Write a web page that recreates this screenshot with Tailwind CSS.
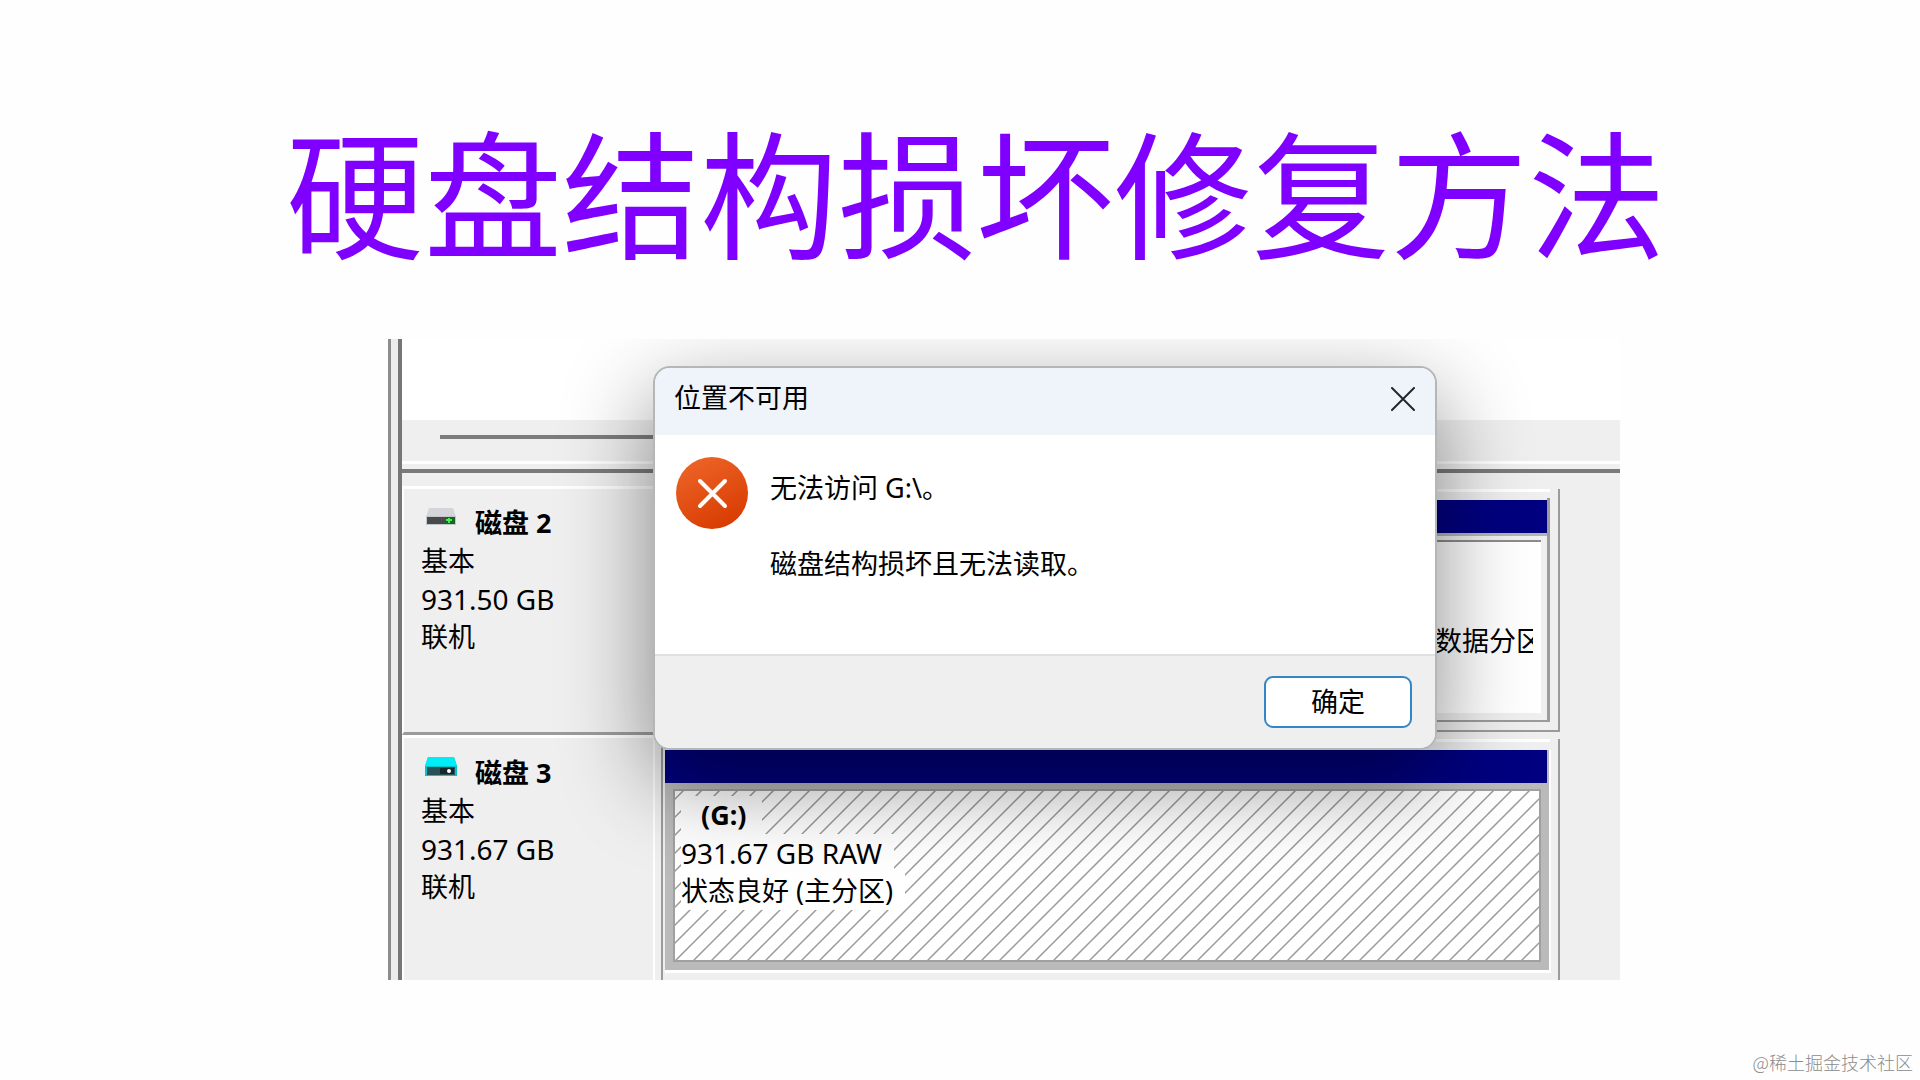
<!DOCTYPE html>
<html lang="zh-CN">
<head>
<meta charset="utf-8">
<title>硬盘结构损坏修复方法</title>
<script src="https://cdn.jsdelivr.net/npm/@tailwindcss/browser@4"></script>
</head>
<body class="flex min-h-screen flex-col bg-[#fefefe] text-[27px] leading-[38px] text-black font-['Noto_Sans','Noto_Sans_CJK_SC',sans-serif]">
  <h1 class="pt-[88px] pl-8 text-center text-[138px] leading-[200px] whitespace-nowrap text-[#8000ff] font-['Noto_Sans_CJK_SC',sans-serif]">硬盘结构损坏修复方法</h1>

  <main class="mt-[51px] pr-[300px] pl-[388px]">
    <section class="relative flex overflow-hidden bg-white">
      <!-- Splitter on the left edge -->
      <div class="w-[14px] shrink-0 border-r-4 border-l-3 border-r-[#767676] border-l-[#8c8c8c] bg-[#ececec]"></div>

      <div class="min-w-0 flex-1 bg-[#efefef]">
        <div class="h-[81px] bg-white"></div>
        <div class="h-[41px] pt-[15px] pl-[38px]">
          <div class="h-1 w-[400px] bg-[#7c7c7c]"></div>
        </div>
        <div class="h-3 border-t-3 border-b-4 border-t-white border-b-[#7a7a7a]"></div>

        <!-- Disk 2 -->
        <div class="flex pt-[13px]">
          <div class="flex h-[249px] w-[259px] shrink-0 flex-col border-t-3 border-b-3 border-l-2 border-t-white border-b-[#9b9b9b] border-l-white pt-[15px] pl-[17px]">
            <div class="flex">
              <svg class="mt-1 ml-1 h-[18px] w-[32px] shrink-0" viewBox="0 0 32 18" aria-hidden="true">
                <path d="M4 0h24l3 9H1z" fill="#d3d5d8"/>
                <path d="M1 8h30v9H1z" fill="#c3c6ca"/>
                <path d="M2 9h28v7H2z" fill="#47494a"/>
                <path d="M20 9h10v7H20z" fill="#17681f"/>
                <path d="M24 10v5M21 12h6" stroke="#43ef54" stroke-width="2"/>
              </svg>
              <b class="ml-[18px]">磁盘 2</b>
            </div>
            <span>基本</span>
            <span class="text-[28px]">931.50 GB</span>
            <span>联机</span>
          </div>
          <div class="mt-[3px] mr-[60px] flex h-[243px] min-w-0 flex-1 flex-col border-r-2 border-b-2 border-l-2 border-[#9b9b9b]">
            <div class="mr-2 h-[9px] border-t-3 border-white"></div>
            <div class="mr-2 mb-2 ml-1 flex flex-1 flex-col border-r-3 border-b-2 border-[#9b9b9b]">
              <div class="mt-[2px] h-[36px] border-b-3 border-[#b5b5b5] bg-[#000080]"></div>
              <div class="mt-[4px] mr-[6px] mb-[7px] flex flex-1 items-end justify-end border-t-2 border-[#8c8c8c] bg-white pr-[8px] pb-[53px]">
                <div class="w-[98px] overflow-hidden whitespace-nowrap">数据分区</div>
              </div>
            </div>
          </div>
        </div>

        <!-- Disk 3 -->
        <div class="flex h-[245px]">
          <div class="mr-[6px] flex w-[253px] shrink-0 flex-col border-t-3 border-r-2 border-l-2 border-white pt-[16px] pl-[17px]">
            <div class="flex">
              <svg class="mt-[3px] ml-1 h-[20px] w-[32px] shrink-0" viewBox="0 0 32 20" aria-hidden="true">
                <path d="M3 0h26l3 9v10H0V9z" fill="#00c5cd"/>
                <path d="M3 0h26l3 9H0z" fill="#00edf8"/>
                <path d="M2 10h28v8H2z" fill="#285158"/>
                <path d="M15 11h14v6H15z" fill="#18272b"/>
                <circle cx="24" cy="14" r="2" fill="#fff"/>
              </svg>
              <b class="ml-[18px]">磁盘 3</b>
            </div>
            <span>基本</span>
            <span class="text-[28px]">931.67 GB</span>
            <span>联机</span>
          </div>
          <div class="mt-[4px] mr-[60px] flex min-w-0 flex-1 flex-col border-r-2 border-l-2 border-[#9b9b9b]">
            <div class="mr-2 h-[11px] border-t-3 border-white"></div>
            <div class="mr-[7px] ml-[2px] flex h-[223px] flex-col border-r-2 border-b-3 border-white bg-[#bababa]">
              <div class="mr-[2px] h-[33px] bg-[#000080]"></div>
              <div class="relative mx-2 mt-[6px] mb-2 flex-1 border-2 border-[#a0a0a0] bg-white">
                <svg class="absolute inset-0 h-full w-full" aria-hidden="true">
                  <defs>
                    <pattern id="hatch" width="18" height="18" patternUnits="userSpaceOnUse">
                      <path d="M-2 10L10 -2M6 20L20 6" stroke="#9a9a9a" stroke-width="1.5"/>
                    </pattern>
                  </defs>
                  <rect width="100%" height="100%" fill="url(#hatch)"/>
                </svg>
                <div class="relative flex flex-col items-start pt-[5px] pl-[6px]">
                  <b class="bg-white pr-4 pl-5">(G:)</b>
                  <span class="bg-white pr-3 text-[28px]">931.67 GB RAW</span>
                  <span class="bg-white pr-3">状态良好 (主分区)</span>
                </div>
              </div>
            </div>
          </div>
        </div>
      </div>

      <!-- Error dialog over the disk list -->
      <div role="dialog" aria-labelledby="dialog-title" class="absolute top-[27px] right-[183px] left-[265px] flex h-[384px] flex-col overflow-hidden rounded-[17px] border-2 border-[#b4b7b9] bg-white shadow-[0_30px_90px_rgba(0,0,0,0.46)]">
        <header class="flex h-[67px] items-start justify-between bg-[#eef4f9] pt-[11px] pr-5 pl-[19px]">
          <h2 id="dialog-title">位置不可用</h2>
          <button type="button" aria-label="关闭" class="mt-[8px]">
            <svg class="size-6" viewBox="0 0 24 24" fill="none" stroke="#22272b" stroke-width="2" stroke-linecap="round"><path d="M1 1l22 22M23 1L1 23"/></svg>
          </button>
        </header>
        <div class="flex flex-1 gap-[21px] pt-[22px] pl-[21px]">
          <svg class="size-[73px] shrink-0" viewBox="0 0 73 73" aria-hidden="true">
            <defs><linearGradient id="alert" x1="0.2" y1="0" x2="0.7" y2="1"><stop stop-color="#ed6528"/><stop offset="1" stop-color="#d83b01"/></linearGradient></defs>
            <circle cx="36" cy="36" r="36" fill="url(#alert)"/>
            <path d="M24 24l25 25M49 24L24 49" stroke="#fff" stroke-width="4" stroke-linecap="round"/>
          </svg>
          <div class="flex flex-col gap-[38px] pt-3">
            <p>无法访问 G:\。</p>
            <p>磁盘结构损坏且无法读取。</p>
          </div>
        </div>
        <footer class="flex h-[94px] items-start justify-end border-t-2 border-[#e0e0e0] bg-[#efefef] pt-5 pr-[23px]">
          <button type="button" class="h-[52px] w-[148px] rounded-[9px] border-2 border-[#3486c4] bg-white">确定</button>
        </footer>
      </div>
    </section>
  </main>

  <footer class="mt-auto pr-[7px] pb-[5px] text-right text-[18px] leading-[26px] font-light text-[#8c8c8c] font-['Noto_Sans_CJK_SC',sans-serif]">@稀土掘金技术社区</footer>
</body>
</html>
